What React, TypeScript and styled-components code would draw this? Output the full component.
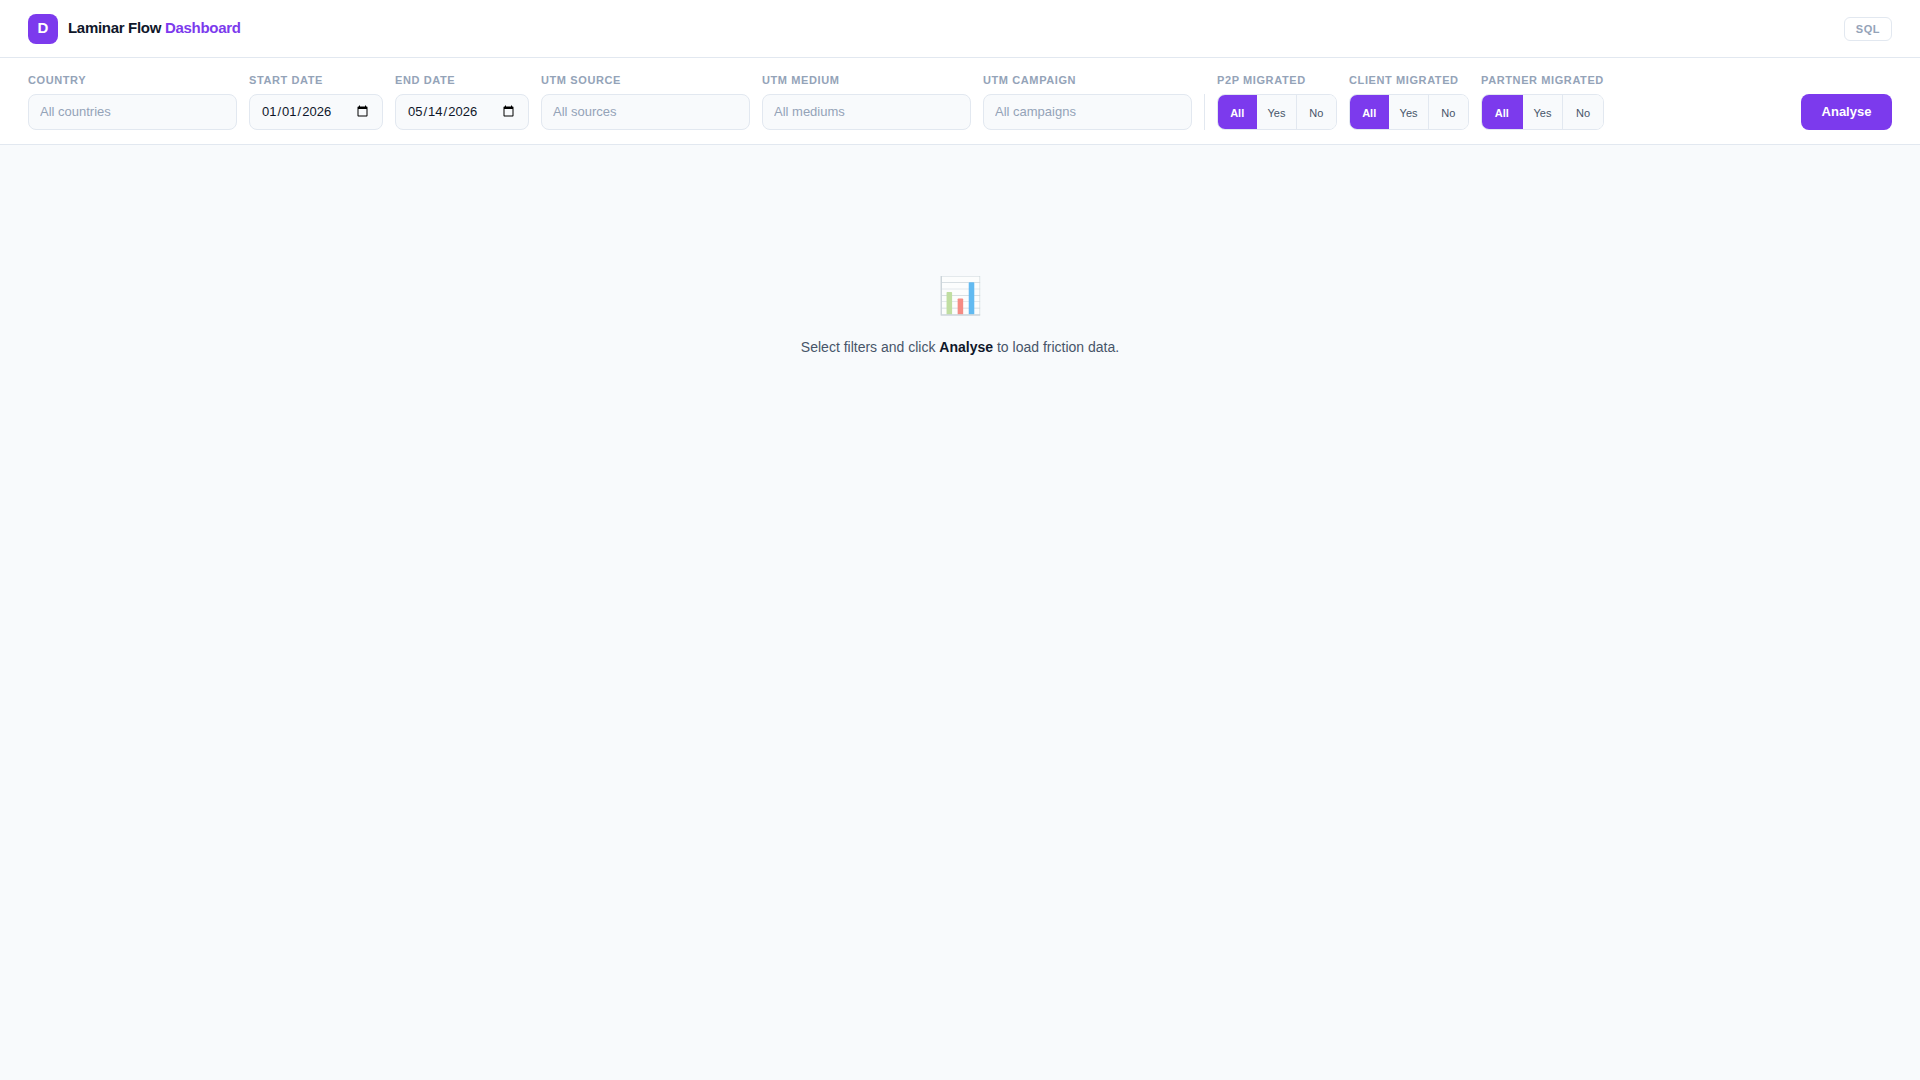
import styled, { createGlobalStyle } from 'styled-components'

const GlobalStyle = createGlobalStyle`
    * {
        box-sizing: border-box;
    }
    html, body {
        margin: 0;
        background: #f8fafc;
        font-family: 'Liberation Sans', Arial, sans-serif;
        color: #0f172a;
    }
`
const Page = styled.div`
    min-height: 100vh;
    display: flex;
    flex-direction: column;
`
const Header = styled.header`
    height: 58px;
    background: white;
    border-bottom: 1px solid #e2e8f0;
    padding: 0 28px;
    display: flex;
    align-items: center;
    justify-content: space-between;
`
const Brand = styled.div`
    display: flex;
    align-items: center;
    gap: 10px;
`
const LogoMark = styled.div`
    width: 30px;
    height: 30px;
    padding-bottom: 2px;
    border-radius: 8px;
    background: #7c3aed;
    color: white;
    font-size: 15px;
    font-weight: 700;
    display: flex;
    align-items: center;
    justify-content: center;
`
const Title = styled.div`
    margin-bottom: 2px;
    font-size: 15px;
    font-weight: 700;
    letter-spacing: -0.3px;
    span {
        color: #7c3aed;
    }
`
const SqlBadge = styled.button`
    height: 24px;
    width: 48px;
    padding: 0;
    background: white;
    border: 1px solid #e2e8f0;
    border-radius: 6px;
    color: #94a3b8;
    font-family: inherit;
    font-size: 11px;
    font-weight: 700;
    letter-spacing: 0.6px;
`
const FilterBar = styled.div`
    background: white;
    border-bottom: 1px solid #e2e8f0;
    padding: 15px 28px 14px;
    display: flex;
    align-items: flex-end;
    gap: 12px;
`
const Field = styled.div`
    display: flex;
    flex-direction: column;
    gap: 7px;
`
const Label = styled.label`
    font-size: 11px;
    line-height: 14px;
    font-weight: 700;
    letter-spacing: 0.6px;
    text-transform: uppercase;
    color: #94a3b8;
    white-space: nowrap;
`
const TextInput = styled.input`
    width: 209px;
    height: 36px;
    padding: 0 11px 2px;
    background: #f8fafc;
    border: 1px solid #e2e8f0;
    border-radius: 8px;
    font-family: inherit;
    font-size: 13px;
    color: #0f172a;
    outline: none;
    &::placeholder {
        color: #94a3b8;
        opacity: 1;
    }
`
const DateInput = styled(TextInput)`
    width: 134px;
`
const Divider = styled.div`
    width: 1px;
    height: 36px;
    background: #e2e8f0;
`
const Segment = styled.div`
    display: flex;
    height: 36px;
    border: 1px solid #e2e8f0;
    border-radius: 8px;
    overflow: hidden;
`
const SegmentButton = styled.button<{ $active?: boolean }>`
    flex: 1;
    min-width: 39.35px;
    padding: 1px 0 0;
    border: none;
    border-right: 1px solid ${p => (p.$active ? '#7c3aed' : '#e2e8f0')};
    background: ${p => (p.$active ? '#7c3aed' : '#f8fafc')};
    color: ${p => (p.$active ? 'white' : '#475569')};
    font-family: inherit;
    font-size: 11px;
    font-weight: ${p => (p.$active ? 700 : 400)};
    &:last-child {
        border-right: none;
    }
`
const AnalyseButton = styled.button`
    margin-left: auto;
    width: 91px;
    height: 36px;
    padding: 0 0 2px;
    background: #7c3aed;
    border: none;
    border-radius: 8px;
    color: white;
    font-family: inherit;
    font-size: 13px;
    font-weight: 700;
`
const EmptyState = styled.main`
    flex: 1;
    padding-top: 130px;
    display: flex;
    flex-direction: column;
    align-items: center;
    gap: 20px;
`
const EmptyIcon = styled.div`
    font-size: 36px;
    line-height: 42px;
    opacity: 0.6;
`
const EmptyText = styled.p`
    margin: 0;
    font-size: 14px;
    line-height: 20px;
    color: #475569;
    strong {
        color: #0f172a;
    }
`

function TextFilter({ label, placeholder }: { label: string; placeholder: string }) {
    return (
        <Field>
            <Label>{label}</Label>
            <TextInput placeholder={placeholder} />
        </Field>
    )
}

function DateFilter({ label, value }: { label: string; value: string }) {
    return (
        <Field>
            <Label>{label}</Label>
            <DateInput type="date" defaultValue={value} />
        </Field>
    )
}

function SegmentFilter({ label }: { label: string }) {
    return (
        <Field>
            <Label>{label}</Label>
            <Segment>
                <SegmentButton $active>All</SegmentButton>
                <SegmentButton>Yes</SegmentButton>
                <SegmentButton>No</SegmentButton>
            </Segment>
        </Field>
    )
}

export default function App() {
    return (
        <Page>
            <GlobalStyle />
            <Header>
                <Brand>
                    <LogoMark>D</LogoMark>
                    <Title>
                        Laminar Flow <span>Dashboard</span>
                    </Title>
                </Brand>
                <SqlBadge>SQL</SqlBadge>
            </Header>
            <FilterBar>
                <TextFilter label="Country" placeholder="All countries" />
                <DateFilter label="Start Date" value="2026-01-01" />
                <DateFilter label="End Date" value="2026-05-14" />
                <TextFilter label="UTM Source" placeholder="All sources" />
                <TextFilter label="UTM Medium" placeholder="All mediums" />
                <TextFilter label="UTM Campaign" placeholder="All campaigns" />
                <Divider />
                <SegmentFilter label="P2P Migrated" />
                <SegmentFilter label="Client Migrated" />
                <SegmentFilter label="Partner Migrated" />
                <AnalyseButton>Analyse</AnalyseButton>
            </FilterBar>
            <EmptyState>
                <EmptyIcon>📊</EmptyIcon>
                <EmptyText>
                    Select filters and click <strong>Analyse</strong> to load friction data.
                </EmptyText>
            </EmptyState>
        </Page>
    )
}
